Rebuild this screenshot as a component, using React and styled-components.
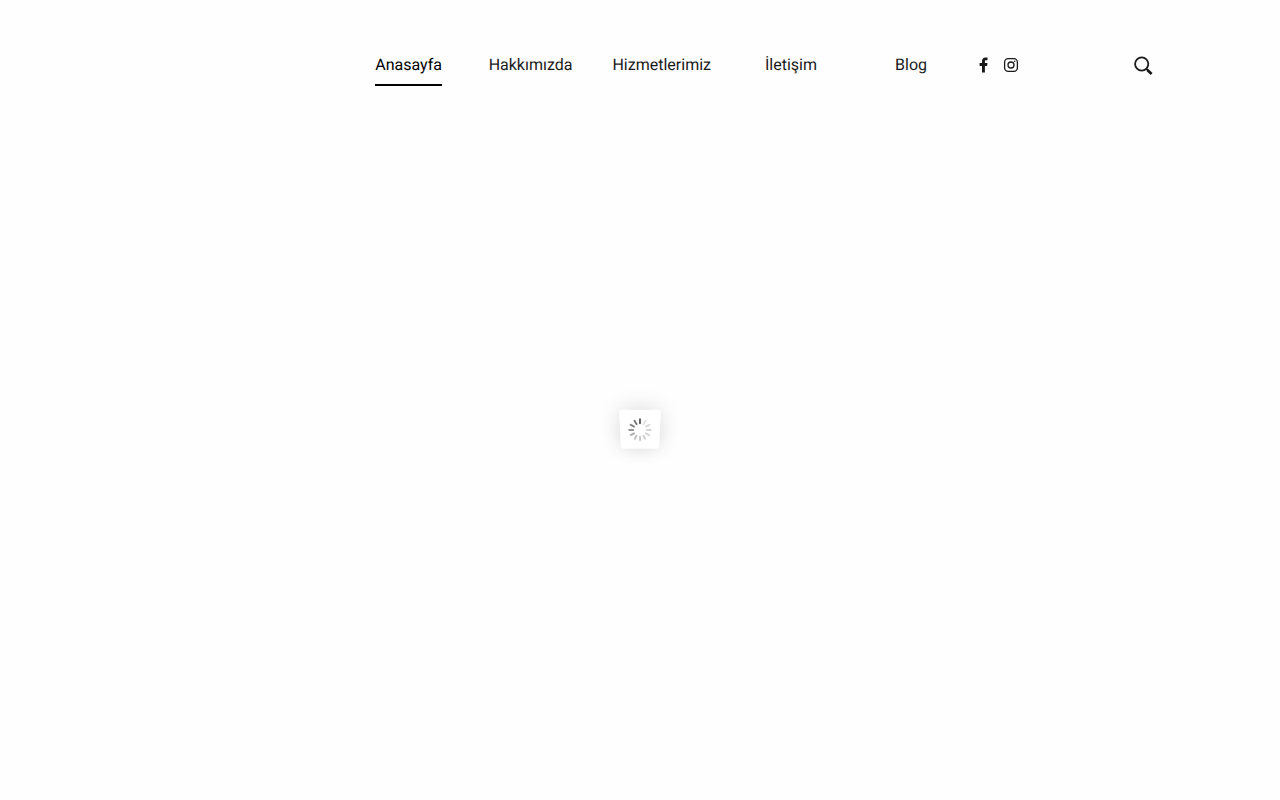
import React from "react";
import styled, { createGlobalStyle } from "styled-components";

const GlobalStyle = createGlobalStyle`
  * { box-sizing: border-box; }
  body {
    margin: 0;
    background: #fefefe;
    color: #191919;
    font-family: Roboto, "Liberation Sans", sans-serif;
    font-size: 16px;
    line-height: 26px;
    text-rendering: geometricPrecision;
  }
`;

const Page = styled.div`
  min-height: 100vh;
  display: flex;
  flex-direction: column;
`;

const Header = styled.header`
  display: flex;
  justify-content: flex-end;
  align-items: flex-start;
  padding: 52px 127px 0;
`;

const Menu = styled.ul`
  display: flex;
  margin: 0;
  padding: 0;
  list-style: none;
`;

const MenuItem = styled.li`
  display: flex;
  justify-content: center;
  min-width: 120px;
  padding: 0 20px;
`;

const MenuLink = styled.a`
  padding-bottom: 6px;
  border-bottom: 2px solid ${(p) => (p.$active ? "#000" : "transparent")};
  color: ${(p) => (p.$active ? "#000" : "#191919")};
  text-decoration: none;
  white-space: nowrap;
`;

const Social = styled.div`
  display: flex;
  align-items: center;
  gap: 11px;
  height: 26px;
  padding-left: 5px;
  margin-right: 115px;
`;

const SocialLink = styled.a`
  display: flex;
  color: #191919;
`;

const SearchButton = styled.button`
  display: flex;
  align-items: center;
  height: 28px;
  padding: 0;
  border: 0;
  background: none;
  color: #191919;
  cursor: pointer;
`;

const Main = styled.main`
  position: fixed;
  inset: 60px 0 0;
  display: flex;
  align-items: center;
  justify-content: center;
  pointer-events: none;
`;

const Loader = styled.div`
  display: flex;
  align-items: center;
  justify-content: center;
  width: 40px;
  height: 40px;
  border-radius: 3px;
  background: #fff;
  box-shadow: 0 0 20px rgba(0, 0, 0, 0.15);
  transform: perspective(120px) rotateX(-14deg);
`;

const items = ["Anasayfa", "Hakkımızda", "Hizmetlerimiz", "İletişim", "Blog"];
const spokes = [0.68, 0.13, 0.15, 0.17, 0.19, 0.21, 0.24, 0.29, 0.35, 0.42, 0.5, 0.6];

export default function App() {
  return (
    <Page>
      <GlobalStyle />
      <Header>
        <nav aria-label="Menü">
          <Menu>
            {items.map((item, i) => (
              <MenuItem key={item}>
                <MenuLink href="#" $active={i === 0} aria-current={i === 0 ? "page" : undefined}>
                  {item}
                </MenuLink>
              </MenuItem>
            ))}
          </Menu>
        </nav>
        <Social>
          <SocialLink href="#" aria-label="Facebook">
            <svg width="16" height="16" viewBox="0 0 16 16" fill="currentColor">
              <path d="M6 15.6V9H3.6V6H6V4.2C6 1.8 7.3.4 9.5.4c.9 0 1.7.1 2 .2v2.6h-1.4c-1 0-1.2.5-1.2 1.3V6h2.6l-.4 3H8.9v6.6z" />
            </svg>
          </SocialLink>
          <SocialLink href="#" aria-label="Instagram">
            <svg width="16" height="16" viewBox="0 0 16 16" fill="none" stroke="currentColor" strokeWidth="1.3">
              <rect x="1.6" y="1.6" width="12.8" height="12.8" rx="3.6" />
              <circle cx="8" cy="8" r="3" />
              <circle cx="11.7" cy="4.3" r="0.8" fill="currentColor" stroke="none" />
            </svg>
          </SocialLink>
        </Social>
        <SearchButton type="button" aria-label="Ara">
          <svg width="19" height="20" viewBox="0 0 19 20" fill="none" stroke="currentColor">
            <circle cx="7.7" cy="8" r="6.6" strokeWidth="1.8" />
            <path d="M12.3 12.8l1.7 1.6" strokeWidth="1.9" />
            <path d="M13.4 13.9l4.2 4.1" strokeWidth="2.8" />
          </svg>
        </SearchButton>
      </Header>
      <Main>
        <Loader role="status" aria-label="Yükleniyor">
          <svg width="24" height="24" viewBox="0 0 24 24" stroke="#000" strokeWidth="1.8" strokeLinecap="round">
            {spokes.map((opacity, i) => (
              <path key={i} d="M12 1.2v4" opacity={opacity} transform={`rotate(${i * 30} 12 12)`} />
            ))}
          </svg>
        </Loader>
      </Main>
    </Page>
  );
}
